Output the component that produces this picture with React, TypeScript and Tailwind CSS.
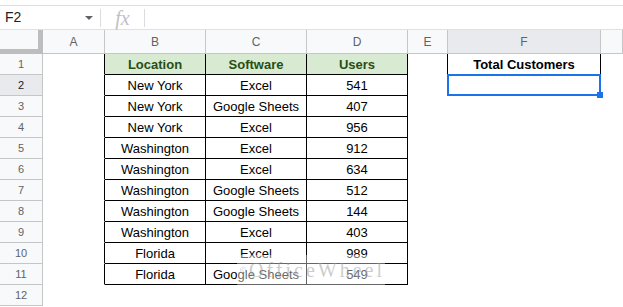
import React from 'react'

const COLS = ['A', 'B', 'C', 'D', 'E', 'F', '']

const rows: [string, string, string][] = [
  ['New York', 'Excel', '541'],
  ['New York', 'Google Sheets', '407'],
  ['New York', 'Excel', '956'],
  ['Washington', 'Excel', '912'],
  ['Washington', 'Excel', '634'],
  ['Washington', 'Google Sheets', '512'],
  ['Washington', 'Google Sheets', '144'],
  ['Washington', 'Excel', '403'],
  ['Florida', 'Excel', '989'],
  ['Florida', 'Google Sheets', '549'],
]

const cellBase = 'h-[21px] border-r border-b flex items-center justify-center text-[13px] leading-none whitespace-nowrap'

function RowHeader({ n, active }: { n: number; active?: boolean }) {
  return (
    <div
      className={`h-[21px] border-r border-b border-[#c4c7c5] flex items-center justify-center text-[11px] text-[#5f6368] ${
        active ? 'bg-[#e8eaed] text-[#202124]' : 'bg-[#f8f9fa]'
      }`}
    >
      {n}
    </div>
  )
}

// faint site watermark sitting over the last rows
function Watermark() {
  return (
    <div aria-hidden className="absolute left-[237px] top-[255px] w-[148px] h-[30px] bg-white/40 flex items-center gap-[3px] pl-[3px] pointer-events-none">
      <svg width="16" height="18" viewBox="0 0 16 18" className="opacity-40">
        <path d="M8 1 L15 5 L15 13 L8 17 L1 13 L1 5 Z" fill="none" stroke="#8a8a8a" strokeWidth="1.5" />
        <path d="M10.5 6.5 A3.5 3.5 0 1 0 10.5 11.5" fill="none" stroke="#8a8a8a" strokeWidth="1.5" />
      </svg>
      <span className="font-['Liberation_Serif',serif] text-[20px] tracking-[3px] text-[#9a9a9a]/50">OfficeWheel</span>
    </div>
  )
}

export default function App() {
  return (
    <div className="relative w-[623px] h-[307px] overflow-hidden bg-white font-['Liberation_Sans',Arial,sans-serif] text-black">
      {/* Formula bar */}
      <div className="pt-[5px]">
        <div className="h-[25px] border-t border-b border-[#e0e0e0] flex items-center">
          <div className="w-[100px] flex items-center justify-between pl-[5px] pr-[7px]">
            <span className="text-[14px] text-[#202124]">F2</span>
            <span className="w-0 h-0 border-l-[4px] border-r-[4px] border-t-[4px] border-l-transparent border-r-transparent border-t-[#5f6368]" />
          </div>
          <div className="h-[18px] border-l border-[#dadce0]" />
          <div className="w-[43px] flex items-center justify-center">
            <span className="font-['Liberation_Serif',serif] italic text-[20px] leading-none text-[#bdc1c6]">fx</span>
          </div>
          <div className="h-[18px] border-l border-[#dadce0]" />
        </div>
      </div>

      {/* Grid */}
      <div className="grid grid-cols-[43px_62px_101px_101px_101px_40px_153px_1fr]">
        {/* Column headers */}
        <div className="h-[24px] bg-[#f8f9fa] border-r-[5px] border-b-[5px] border-[#bdbdbd]" />
        {COLS.map((c, i) => (
          <div
            key={i}
            className={`h-[24px] border-r border-b border-[#c4c7c5] flex items-center justify-center text-[12px] text-[#5f6368] ${
              c === 'F' ? 'bg-[#e8eaed]' : 'bg-[#f8f9fa]'
            }`}
          >
            {c}
          </div>
        ))}

        {/* Row 1 */}
        <RowHeader n={1} />
        <div className={`${cellBase} border-r-black border-b-white`} />
        <div className={`${cellBase} border-black bg-[#d9ead3] font-bold text-[#274e13]`}>Location</div>
        <div className={`${cellBase} border-black bg-[#d9ead3] font-bold text-[#274e13]`}>Software</div>
        <div className={`${cellBase} border-black bg-[#d9ead3] font-bold text-[#274e13]`}>Users</div>
        <div className={`${cellBase} border-r-black border-b-white`} />
        <div className={`${cellBase} border-black font-bold`}>Total Customers</div>
        <div className={`${cellBase} border-white`} />

        {/* Data rows */}
        {rows.map((r, i) => {
          const n = i + 2
          return (
            <React.Fragment key={n}>
              <RowHeader n={n} active={n === 2} />
              <div className={`${cellBase} border-r-black border-b-white`} />
              <div className={`${cellBase} border-black`}>{r[0]}</div>
              <div className={`${cellBase} border-black`}>{r[1]}</div>
              <div className={`${cellBase} border-black`}>{r[2]}</div>
              {n === 2 ? (
                <>
                  <div className={`${cellBase} border-r-black border-b-white`} />
                  <div className={`${cellBase} border-white relative`}>
                    <div className="absolute left-[-1px] top-[-1px] w-[154px] h-[22px] border-2 border-[#1a73e8]" />
                    <div className="absolute left-[149px] top-[17px] w-[6px] h-[6px] bg-[#1a73e8]" />
                  </div>
                </>
              ) : (
                <>
                  <div className={`${cellBase} border-white`} />
                  <div className={`${cellBase} border-white`} />
                </>
              )}
              <div className={`${cellBase} border-white`} />
            </React.Fragment>
          )
        })}

        {/* Row 12 */}
        <RowHeader n={12} />
        {COLS.map((_, i) => (
          <div key={i} className={`${cellBase} border-white`} />
        ))}
      </div>

      <Watermark />
    </div>
  )
}
